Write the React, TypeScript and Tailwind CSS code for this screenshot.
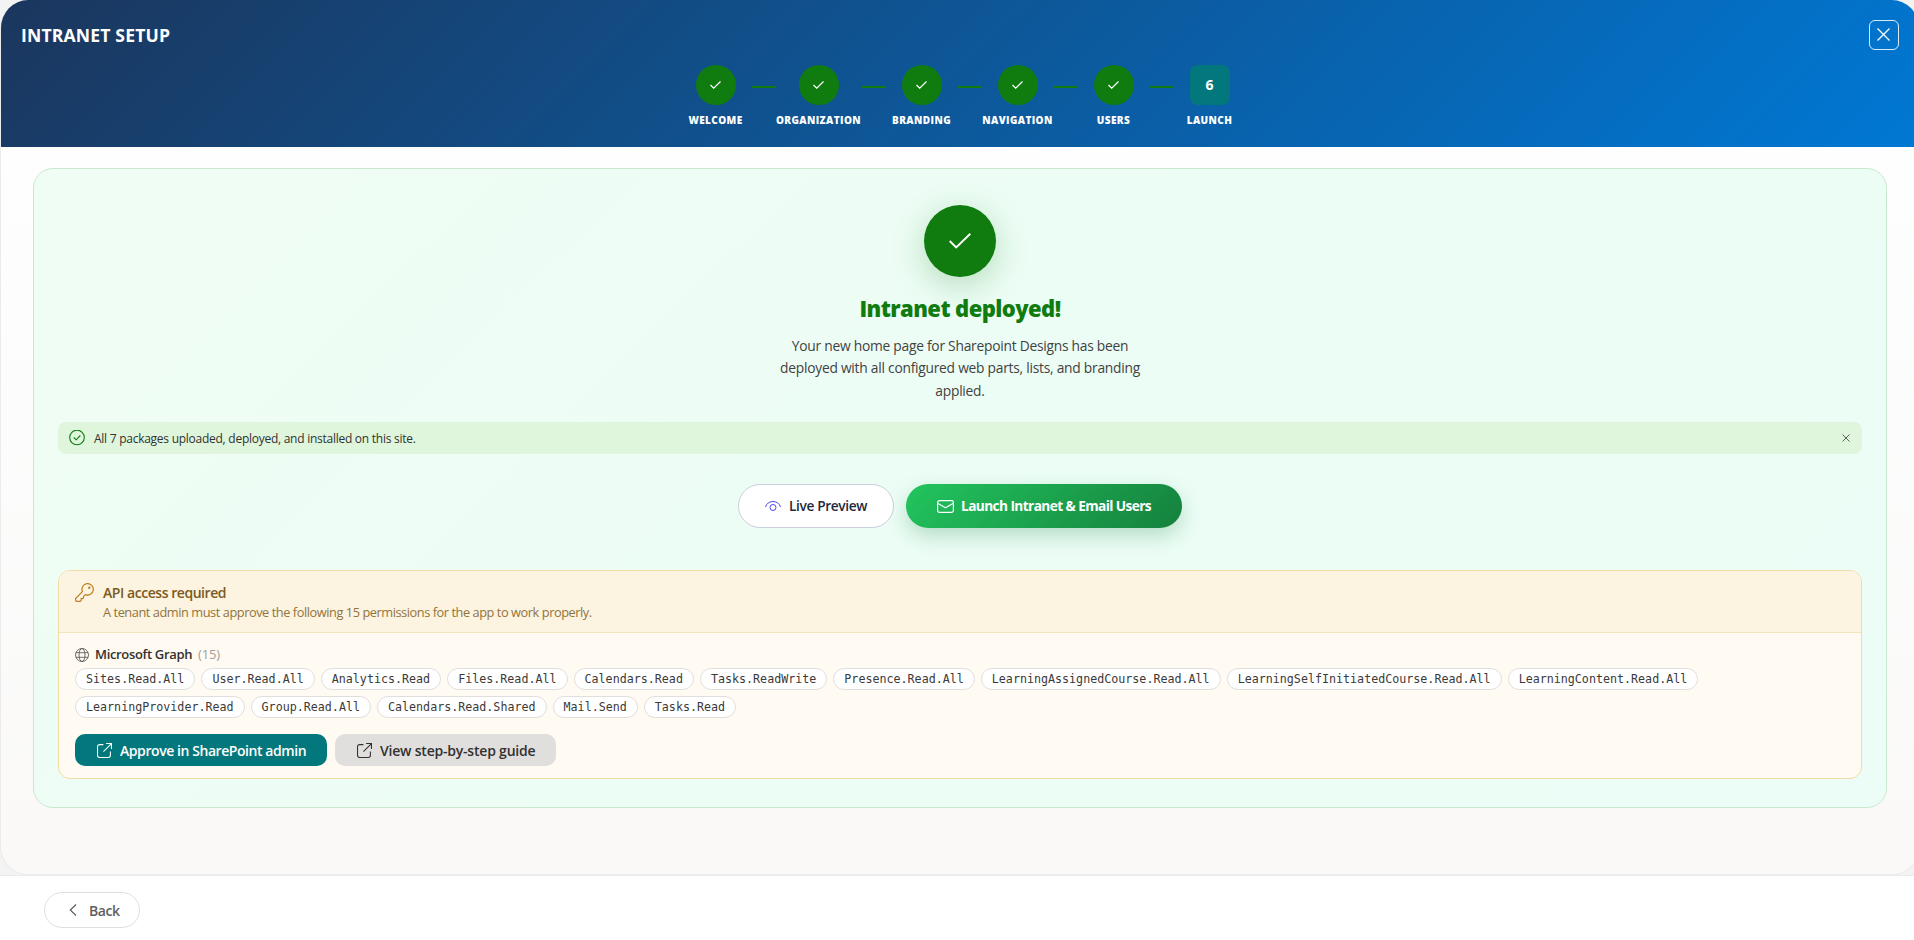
import React from 'react'

interface Permission { name: string }

const steps = [
  { label: 'WELCOME', width: 'w-[72px]' },
  { label: 'ORGANIZATION', width: 'w-[86px]' },
  { label: 'BRANDING', width: 'w-[72px]' },
  { label: 'NAVIGATION', width: 'w-[72px]' },
  { label: 'USERS', width: 'w-[72px]' },
  { label: 'LAUNCH', width: 'w-[72px]' },
]

const permissions: Permission[] = [
  'Sites.Read.All', 'User.Read.All', 'Analytics.Read', 'Files.Read.All', 'Calendars.Read',
  'Tasks.ReadWrite', 'Presence.Read.All', 'LearningAssignedCourse.Read.All',
  'LearningSelfInitiatedCourse.Read.All', 'LearningContent.Read.All', 'LearningProvider.Read',
  'Group.Read.All', 'Calendars.Read.Shared', 'Mail.Send', 'Tasks.Read',
].map(name => ({ name }))

interface IconProps {
  className: string
  viewBox: string
  stroke?: number
  children: React.ReactNode
}

const Icon = ({ className, viewBox, stroke = 1, children }: IconProps) => (
  <svg className={`shrink-0 ${className}`} viewBox={viewBox} fill="none" stroke="currentColor" strokeWidth={stroke}>
    {children}
  </svg>
)

const OpenIcon = () => (
  <Icon className="h-[15px] w-[15px]" viewBox="0 0 14 14">
    <path d="M6 1.5H2.5a2 2 0 0 0-2 2v8a2 2 0 0 0 2 2h8a2 2 0 0 0 2-2V8M8.5.5h5v5M13.5.5l-7.5 7.5" />
  </Icon>
)

const Stepper = () => (
  <div className="flex justify-center pl-[5px]">
    {steps.map((step, index) => {
      const current = index === steps.length - 1
      return (
        <React.Fragment key={step.label}>
          {index > 0 && <div className="mt-[21px] h-[2px] w-6 bg-[#107c10]" />}
          <div className={`flex flex-col items-center ${step.width}`}>
            <div className={`flex h-10 w-10 items-center justify-center text-[14px] font-bold text-white ${current ? 'rounded-lg bg-[#03787c] pb-px' : 'rounded-full bg-[#107c10]'}`}>
              {current ? '6' : (
                <Icon className="h-[8px] w-[11px]" viewBox="0 0 11 8" stroke={1.2}>
                  <path d="M.5 4l3.2 3.2L10.5.5" />
                </Icon>
              )}
            </div>
            <span className="mt-[7px] text-[10px] leading-4 font-extrabold tracking-[0.4px] whitespace-nowrap text-white">{step.label}</span>
          </div>
        </React.Fragment>
      )
    })}
  </div>
)

const Header = () => (
  <div className="h-[147px] shrink-0 bg-[linear-gradient(135deg,#1b365d_0%,#0078d4_100%)] pt-5">
    <div className="flex h-[30px] items-start justify-between px-5">
      <h1 className="pt-0.5 text-[17.6px] leading-[26px] font-bold tracking-[0.15px] text-white">INTRANET SETUP</h1>
      <button className="flex h-[30px] w-[30px] items-center justify-center rounded-md border border-white/85 pr-px pb-px text-white">
        <Icon className="h-[13px] w-[13px]" viewBox="0 0 13 13" stroke={1.3}>
          <path d="M.5.5l12 12M12.5.5l-12 12" />
        </Icon>
      </button>
    </div>
    <div className="mt-[15px]"><Stepper /></div>
  </div>
)

const DeployedMessage = () => (
  <div className="flex flex-col items-center">
    <div className="flex h-[72px] w-[72px] items-center justify-center rounded-full bg-[#107c10] text-white shadow-[0_8px_32px_rgba(16,124,16,0.25)]">
      <Icon className="h-[16px] w-[22px]" viewBox="0 0 22 16" stroke={1.9}>
        <path d="M.7 8l6.5 6.5L21.3.8" />
      </Icon>
    </div>
    <h2 className="mt-[15px] text-[22px] leading-[32px] font-extrabold tracking-[-0.57px] text-[#107c10]">Intranet deployed!</h2>
    <p className="mt-[11px] text-center text-[13.8px] leading-[22.4px] tracking-[-0.25px] text-[#424242]">
      Your new home page for Sharepoint Designs has been<br />
      deployed with all configured web parts, lists, and branding<br />
      applied.
    </p>
  </div>
)

const SuccessBar = () => (
  <div className="mt-[20px] flex h-8 items-center rounded-lg bg-[#dff6dd] pr-3 pl-[11px]">
    <Icon className="h-4 w-4 text-[#107c10]" viewBox="0 0 16 16" stroke={1.1}>
      <circle cx="8" cy="7.5" r="7.3" />
      <path d="M4.8 7.5l2.3 2.3 4.2-4.3" />
    </Icon>
    <span className="ml-[9px] pt-px text-[12px] tracking-[-0.26px] text-[#323130]">All 7 packages uploaded, deployed, and installed on this site.</span>
    <Icon className="ml-auto h-[8px] w-[8px] text-[#605e5c]" viewBox="0 0 8 8">
      <path d="M.5.5l7 7M7.5.5l-7 7" />
    </Icon>
  </div>
)

const Actions = () => (
  <div className="mt-[30px] flex justify-center gap-3">
    <button className="flex h-11 w-[156px] items-center rounded-full border border-[#cbd0dc] bg-white pl-[26px] text-[13.7px] font-semibold tracking-[-0.36px] whitespace-nowrap text-[#1e293b]">
      <Icon className="h-4 w-4 text-[#4f46e5]" viewBox="0 0 16 16">
        <path d="M.5 9C1.5 5.5 4.5 3.5 8 3.5s6.5 2 7.5 5.5" />
        <circle cx="8" cy="9.5" r="3" />
      </Icon>
      <span className="ml-2">Live Preview</span>
    </button>
    <button className="flex h-11 w-[276px] items-center rounded-full bg-[linear-gradient(135deg,#22c55e_0%,#15803d_100%)] pl-[31px] text-[13.7px] font-bold tracking-[-0.6px] whitespace-nowrap text-white shadow-[0_8px_20px_rgba(21,128,61,0.25)]">
      <Icon className="h-[13px] w-[17px]" viewBox="0 0 17 13" stroke={1.2}>
        <rect x=".6" y=".6" width="15.8" height="11.8" rx="1.8" />
        <path d="M.6 3.3l7.9 4.4 7.9-4.4" />
      </Icon>
      <span className="ml-[7px]">Launch Intranet &amp; Email Users</span>
    </button>
  </div>
)

const ApiAccess = () => (
  <div className="mt-[42px] h-[209px] overflow-hidden rounded-xl border border-[#f0dca5] bg-[#fffaf2]">
    <div className="flex h-[62px] border-b border-[#f5e3bd] bg-[#fcf3e1] pt-3 pl-4">
      <Icon className="h-[19px] w-[19px] text-[#c07f1f]" viewBox="0 0 19 19" stroke={1.2}>
        <path d="M7.4 8.6A5.7 5.7 0 1 1 10.4 11.6L8.5 13.4v1.4a.8.8 0 0 1-.8.8H6.2v1.5a1.3 1.3 0 0 1-1.3 1.3H1.9A1.3 1.3 0 0 1 .6 17.1v-1.6z" />
        <circle cx="14.3" cy="4.7" r=".6" />
      </Icon>
      <div className="ml-[9px]">
        <div className="text-[14px] leading-5 font-semibold tracking-[-0.45px] text-[#7a5a1e]">API access required</div>
        <div className="text-[12.8px] leading-[18px] tracking-[-0.45px] text-[#92733c]">A tenant admin must approve the following 15 permissions for the app to work properly.</div>
      </div>
    </div>
    <div className="px-4 pt-[13px]">
      <div className="flex h-[18px] items-center text-[13px]">
        <Icon className="h-[14px] w-[14px] text-[#605e5c]" viewBox="0 0 14 14" stroke={0.9}>
          <circle cx="7" cy="7" r="6.5" />
          <ellipse cx="7" cy="7" rx="3" ry="6.5" />
          <path d="M1 4.7h12M1 9.3h12" />
        </Icon>
        <span className="ml-1.5 font-semibold tracking-[-0.33px] text-[#323130]">Microsoft Graph</span>
        <span className="ml-1.5 tracking-[-0.2px] text-[#a19f9d]">(15)</span>
      </div>
      <div className="mt-[4px] flex flex-wrap gap-1.5 pr-20">
        {permissions.map(item => (
          <span key={item.name} className="flex h-[22px] items-center rounded-full border border-[#e1dfdd] bg-white px-[10px] pt-px font-['DejaVu_Sans_Mono',monospace] text-[11.68px] text-[#3b3a39]">{item.name}</span>
        ))}
      </div>
      <div className="mt-4 flex gap-2 text-[14px] font-semibold whitespace-nowrap">
        <button className="flex h-8 w-[252px] items-center rounded-[10px] bg-[#03787c] pl-[22px] tracking-[-0.43px] text-white">
          <OpenIcon /><span className="ml-2">Approve in SharePoint admin</span>
        </button>
        <button className="flex h-8 w-[221px] items-center rounded-[10px] bg-[#e1dfdd] pl-[22px] tracking-[-0.21px] text-[#323130]">
          <OpenIcon /><span className="ml-2">View step-by-step guide</span>
        </button>
      </div>
    </div>
  </div>
)

const App: React.FC = () => {
  return (
    <div className="flex h-[940px] w-full flex-col overflow-hidden bg-[#f3f3f3] font-['Open_Sans','Noto_Sans',sans-serif]">
      <div className="flex h-[875px] w-[1920px] shrink-0 flex-col overflow-hidden rounded-[28px] border-x border-b border-[#ebebeb] bg-[linear-gradient(180deg,#ffffff,#faf9f8)]">
        <Header />
        <main className="px-8 pt-[21px]">
          <section className="h-[640px] w-[1854px] rounded-[20px] border border-[#c9e8cf] bg-[linear-gradient(135deg,#f0fdf4,#ecfdf5_50%,#ebfdf6)] px-6 pt-9">
            <DeployedMessage />
            <SuccessBar />
            <Actions />
            <ApiAccess />
          </section>
        </main>
      </div>
      <footer className="flex flex-1 items-start border-t border-[#edebe9] bg-white pt-4 pl-11">
        <button className="flex h-9 w-24 items-center rounded-full border border-[#e1dfdd] pl-6 text-[14px] font-semibold tracking-[-0.4px] text-[#605e5c]">
          <Icon className="h-3 w-[8px]" viewBox="0 0 8 12" stroke={1.2}>
            <path d="M7 .5L1.3 6 7 11.5" />
          </Icon>
          <span className="ml-[12px]">Back</span>
        </button>
      </footer>
    </div>
  )
}

export default App
